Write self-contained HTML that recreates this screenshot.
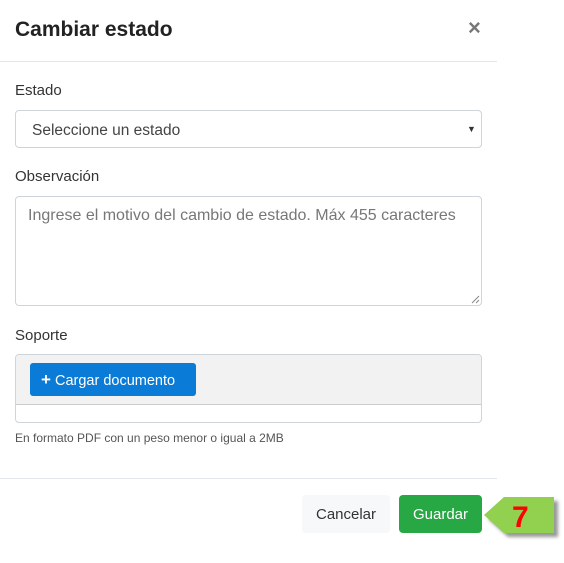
<!DOCTYPE html>
<html><head><meta charset="utf-8"><style>
*{box-sizing:border-box;margin:0;padding:0}
body{width:564px;height:563px;background:#fff;font-family:"Liberation Sans",sans-serif;position:relative;overflow:hidden;color:#212529}
.a{position:absolute}
.title{left:15px;top:18px;font-size:21px;font-weight:bold;color:#222}
.x{left:468px;top:15px;font-size:22px;font-weight:bold;color:#777}
.hr{left:0;width:497px;height:1px;background:#e3e6ea}
.lbl{left:15px;font-size:15px;color:#333}
.box{left:15px;width:467px;border:1px solid #ced4da;border-radius:4px;background:#fff}
</style></head><body>
<div class="a title">Cambiar estado</div>
<div class="a x">×</div>
<div class="a hr" style="top:61px"></div>
<div class="a lbl" style="top:82px">Estado</div>
<div class="a box" style="top:110px;height:38px"></div>
<div class="a" style="left:32px;top:122px;font-size:15.5px;color:#444">Seleccione un estado</div>
<div class="a" style="left:467px;top:124px;font-size:9px;color:#333">▼</div>
<div class="a lbl" style="top:168px">Observación</div>
<div class="a box" style="top:196px;height:110px"></div>
<div class="a" style="left:28px;top:207px;font-size:16px;color:#777">Ingrese el motivo del cambio de estado. Máx 455 caracteres</div>
<svg class="a" style="left:471px;top:295px" width="9" height="9"><path d="M1 8L8 1M5 8L8 5" stroke="#888" stroke-width="1"/></svg>
<div class="a lbl" style="top:327px">Soporte</div>
<div class="a box" style="top:354px;height:69px;background:#fff"></div>
<div class="a" style="left:16px;top:355px;width:465px;height:50px;background:#f2f2f2;border-bottom:1px solid #ccc;border-radius:3px 3px 0 0"></div>
<div class="a" style="left:30px;top:363px;width:166px;height:33px;background:#0a7bd6;border-radius:3px;color:#fff;font-size:14.5px;line-height:34px;padding-left:11px"><b style="font-size:17px">+</b> Cargar documento</div>
<div class="a" style="left:15px;top:431px;font-size:12px;color:#555">En formato PDF con un peso menor o igual a 2MB</div>
<div class="a hr" style="top:478px"></div>
<div class="a" style="left:302px;top:495px;width:88px;height:38px;background:#f7f8fa;border-radius:4px;font-size:15px;line-height:40px;text-align:center;color:#333">Cancelar</div>
<div class="a" style="left:399px;top:495px;width:83px;height:38px;background:#28a745;border-radius:4px;font-size:15px;line-height:40px;text-align:center;color:#fff">Guardar</div>
<svg class="a" style="left:482px;top:495px" width="82" height="50"><defs><filter id="b"><feGaussianBlur stdDeviation="1.5"/></filter></defs><polygon points="6,24 26,6 76,6 76,42 26,42" fill="#555" opacity=".6" filter="url(#b)"/><polygon points="2,20 22,2 72,2 72,38 22,38" fill="#92d050"/><text x="30" y="32" font-family="Liberation Sans" font-weight="bold" font-size="30" fill="#f00">7</text></svg>
</body></html>
